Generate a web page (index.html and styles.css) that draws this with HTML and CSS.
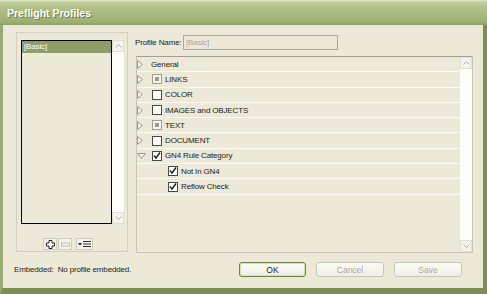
FILE: index.html
```html
<!DOCTYPE html>
<html>
<head>
    <title>Preflight Profiles</title>
    <link rel="stylesheet" href="styles.css">
</head>
<body>
    <div class="window">
        <div class="titlebar">Preflight Profiles</div>

        <div class="frame">
            <div class="content">
                <!-- profiles list -->
                <div class="group">
                    <div class="listbox">
                        <div class="list">
                            <div class="list-item selected">[Basic]</div>
                        </div>
                        <div class="vscroll">
                            <div class="arrow up">
                                <svg width="7" height="4" viewBox="0 0 7 4"><polyline points="0.5,3.5 3.5,0.5 6.5,3.5" fill="none" stroke="#b3b1a3" stroke-width="1"/></svg>
                            </div>
                            <div class="arrow down">
                                <svg width="7" height="4" viewBox="0 0 7 4"><polyline points="0.5,0.5 3.5,3.5 6.5,0.5" fill="none" stroke="#b3b1a3" stroke-width="1"/></svg>
                            </div>
                        </div>
                    </div>

                    <div class="tools">
                        <div class="tool">
                            <svg width="9" height="9" viewBox="0 0 9 9"><path d="M3 0.5h3v2.5h2.5v3h-2.5v2.5h-3v-2.5h-2.5v-3h2.5z" fill="#fff" stroke="#222" stroke-width="1"/></svg>
                        </div>
                        <div class="tool">
                            <svg width="9" height="5" viewBox="0 0 9 5"><rect x="0.5" y="1" width="8" height="3" fill="#f4f3ec" stroke="#c2c0b2" stroke-width="1"/></svg>
                        </div>
                        <div class="tool menu">
                            <svg width="13" height="8" viewBox="0 0 13 8"><polygon points="0,3 4,3 2,5.5" fill="#222"/><rect x="5" y="1" width="8" height="1" fill="#333"/><rect x="5" y="3.5" width="8" height="1" fill="#333"/><rect x="5" y="6" width="8" height="1" fill="#333"/></svg>
                        </div>
                    </div>
                </div>

                <!-- profile detail -->
                <div class="detail">
                    <div class="name-row">
                        <span class="name-label">Profile Name:</span>
                        <div class="name-input">[Basic]</div>
                    </div>

                    <div class="tree-panel">
                        <div class="tree">
                            <div class="row">
                                <span class="tw"><svg width="6" height="9" viewBox="0 0 6 9"><polygon points="0.5,0.5 5.5,4.5 0.5,8.5" fill="#f2f1ea" stroke="#9c9a8c" stroke-width="1"/></svg></span>
                                <span class="label general">General</span>
                            </div>
                            <div class="row">
                                <span class="tw"><svg width="6" height="9" viewBox="0 0 6 9"><polygon points="0.5,0.5 5.5,4.5 0.5,8.5" fill="#f2f1ea" stroke="#9c9a8c" stroke-width="1"/></svg></span>
                                <span class="cb mixed"></span>
                                <span class="label">LINKS</span>
                            </div>
                            <div class="row">
                                <span class="tw"><svg width="6" height="9" viewBox="0 0 6 9"><polygon points="0.5,0.5 5.5,4.5 0.5,8.5" fill="#f2f1ea" stroke="#9c9a8c" stroke-width="1"/></svg></span>
                                <span class="cb"></span>
                                <span class="label">COLOR</span>
                            </div>
                            <div class="row">
                                <span class="tw"><svg width="6" height="9" viewBox="0 0 6 9"><polygon points="0.5,0.5 5.5,4.5 0.5,8.5" fill="#f2f1ea" stroke="#9c9a8c" stroke-width="1"/></svg></span>
                                <span class="cb"></span>
                                <span class="label">IMAGES and OBJECTS</span>
                            </div>
                            <div class="row">
                                <span class="tw"><svg width="6" height="9" viewBox="0 0 6 9"><polygon points="0.5,0.5 5.5,4.5 0.5,8.5" fill="#f2f1ea" stroke="#9c9a8c" stroke-width="1"/></svg></span>
                                <span class="cb mixed"></span>
                                <span class="label">TEXT</span>
                            </div>
                            <div class="row">
                                <span class="tw"><svg width="6" height="9" viewBox="0 0 6 9"><polygon points="0.5,0.5 5.5,4.5 0.5,8.5" fill="#f2f1ea" stroke="#9c9a8c" stroke-width="1"/></svg></span>
                                <span class="cb"></span>
                                <span class="label">DOCUMENT</span>
                            </div>
                            <div class="row">
                                <span class="tw"><svg width="9" height="6" viewBox="0 0 9 6"><polygon points="0.5,0.5 8.5,0.5 4.5,5.5" fill="#f2f1ea" stroke="#9c9a8c" stroke-width="1"/></svg></span>
                                <span class="cb"><svg width="8" height="8" viewBox="0 0 8 8"><polyline points="1,3.5 3,6 7,0.5" fill="none" stroke="#222" stroke-width="1.4"/></svg></span>
                                <span class="label">GN4 Rule Category</span>
                            </div>
                            <div class="row child">
                                <span class="cb"><svg width="8" height="8" viewBox="0 0 8 8"><polyline points="1,3.5 3,6 7,0.5" fill="none" stroke="#222" stroke-width="1.4"/></svg></span>
                                <span class="label">Not In GN4</span>
                            </div>
                            <div class="row child">
                                <span class="cb"><svg width="8" height="8" viewBox="0 0 8 8"><polyline points="1,3.5 3,6 7,0.5" fill="none" stroke="#222" stroke-width="1.4"/></svg></span>
                                <span class="label">Reflow Check</span>
                            </div>
                        </div>
                        <div class="vscroll">
                            <div class="arrow up">
                                <svg width="7" height="4" viewBox="0 0 7 4"><polyline points="0.5,3.5 3.5,0.5 6.5,3.5" fill="none" stroke="#b3b1a3" stroke-width="1"/></svg>
                            </div>
                            <div class="arrow down">
                                <svg width="7" height="4" viewBox="0 0 7 4"><polyline points="0.5,0.5 3.5,3.5 6.5,0.5" fill="none" stroke="#b3b1a3" stroke-width="1"/></svg>
                            </div>
                        </div>
                    </div>
                </div>
            </div>

            <div class="footer">
                <span class="embedded">Embedded:&nbsp; No profile embedded.</span>
                <div class="buttons">
                    <button class="btn default">OK</button>
                    <button class="btn" disabled>Cancel</button>
                    <button class="btn" disabled>Save</button>
                </div>
            </div>
        </div>
    </div>
</body>
</html>
```

FILE: styles.css
```css
body {
    margin: 0;
    padding: 0;
    font-family: "Liberation Sans", Arial, sans-serif;
    font-size: 8px;
    letter-spacing: -0.15px;
    color: #222;
    background: #ece9d8;
}

.window {
    width: 487px;
    height: 294px;
    display: flex;
    flex-direction: column;
    overflow: hidden;
}

.titlebar {
    height: 25px;
    flex: none;
    box-sizing: border-box;
    padding: 7px 0 0 7px;
    font-size: 10.5px;
    font-weight: bold;
    letter-spacing: 0;
    color: #fff;
    text-shadow: 1px 1px 0 #6f7f48;
    background: linear-gradient(#dde6c4 0, #c4d19f 2px, #b0c088 8px, #a6b77d 16px, #9fb075 22px, #8c9e62 25px);
}

.frame {
    flex: 1;
    border-left: 3px solid #98aa6e;
    border-right: 4px solid #7c8e55;
    border-bottom: 6px solid #7c8e55;
    padding: 7px 11px 0 11px;
    background: #ece9d8;
}

.content {
    display: grid;
    grid-template-columns: 112px 337px;
    column-gap: 8px;
    margin-left: 2px;
}

/* left list */
.group {
    height: 220px;
    box-sizing: border-box;
    border: 1px solid #d3d0c0;
    padding: 7px 3px 0 4px;
}

.listbox {
    height: 184px;
    display: flex;
}

.list {
    flex: 1;
    border: 1px solid #000;
    background: #ece9d8;
}

.list-item {
    height: 12px;
    line-height: 12px;
    padding-left: 2px;
}

.list-item.selected {
    background: #8e9e68;
    color: #fff;
}

.vscroll {
    width: 12px;
    flex: none;
    background: #fdfdfa;
    display: flex;
    flex-direction: column;
    justify-content: space-between;
}

.arrow {
    height: 12px;
    box-sizing: border-box;
    border: 1px solid #e2dfd2;
    background: #f4f3ee;
    display: flex;
    align-items: center;
    justify-content: center;
}

.tools {
    display: flex;
    margin: 14px 0 0 22px;
    gap: 1px;
}

.tool {
    width: 14px;
    height: 12px;
    box-sizing: border-box;
    border: 1px solid #cfccbc;
    background: #f3f2ea;
    display: flex;
    align-items: center;
    justify-content: center;
}

.tool.menu {
    width: 17px;
    margin-left: 3px;
}

/* right side */
.name-row {
    display: flex;
    align-items: center;
    margin-top: 3px;
    height: 15px;
}

.name-label {
    width: 48px;
    margin-left: -1px;
    white-space: nowrap;
}

.name-input {
    width: 155px;
    height: 15px;
    box-sizing: border-box;
    border: 1px solid #a9a996;
    padding-left: 2px;
    line-height: 13px;
    color: #a8a697;
}

.tree-panel {
    margin-top: 6px;
    height: 197px;
    box-sizing: border-box;
    border: 1px solid #c9c6b6;
    border-top-color: #a29f90;
    display: flex;
}

.tree {
    flex: 1;
}

.row {
    height: 15.3px;
    box-sizing: border-box;
    border-bottom: 1px solid #fbfaf4;
    display: flex;
    align-items: center;
    white-space: nowrap;
}

.tw {
    width: 15px;
    flex: none;
    display: flex;
    align-items: center;
}

.cb {
    width: 10px;
    height: 10px;
    box-sizing: border-box;
    border: 1px solid #4a4a44;
    background: #fff;
    display: flex;
    align-items: center;
    justify-content: center;
}

.cb.mixed {
    border-color: #a19f94;
    background: #f6f5f0;
}

.cb.mixed::after {
    content: "";
    width: 4px;
    height: 4px;
    background: #9c9a8e;
}

.label {
    margin-left: 3px;
}

.label.general {
    margin-left: -1px;
}

.row.child {
    padding-left: 31px;
}

/* footer */
.footer {
    display: flex;
    align-items: center;
    margin-top: 9px;
    padding-right: 10px;
}

.embedded {
    white-space: nowrap;
}

.buttons {
    margin-left: auto;
    display: flex;
    gap: 10px;
}

.btn {
    width: 68px;
    height: 15px;
    padding: 0;
    font-family: inherit;
    font-size: 8.5px;
    border: 1px solid #c9c7b8;
    border-radius: 3px;
    background: linear-gradient(#fbfbf6, #efeee5);
    color: #aba997;
}

.btn.default {
    width: 67px;
    border-color: #6f8247;
    box-shadow: inset 0 0 0 1px #d8e3b0;
    color: #222;
}
```
